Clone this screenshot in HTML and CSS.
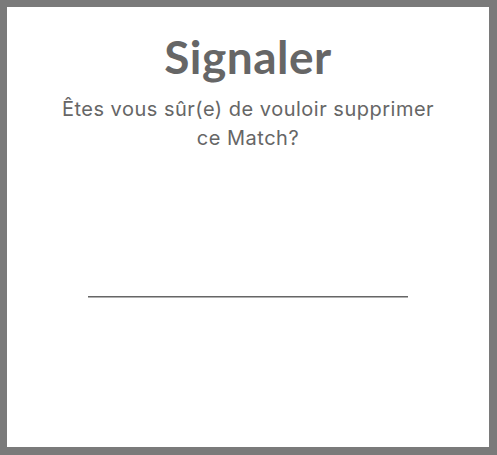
FILE: index.html
```html
<!DOCTYPE html>
<html lang="fr">
<head>
<meta charset="utf-8">
<title>Signaler</title>
<link rel="stylesheet" href="styles.css">
</head>
<body>
<div class="dialog">
  <h1 class="title">Signaler</h1>
  <p class="message">Êtes vous sûr(e) de vouloir supprimer<br>ce Match?</p>
  <div class="field"></div>
</div>
</body>
</html>
```
FILE: styles.css
```css
html, body {
  margin: 0;
  padding: 0;
  background: #7a7a7a;
  width: 497px;
  height: 455px;
  overflow: hidden;
}
.dialog {
  box-sizing: border-box;
  margin: 7px 8px 8px 7px;
  width: 482px;
  height: 440px;
  background: #ffffff;
  display: flex;
  flex-direction: column;
  align-items: center;
  padding-top: 22px;
  font-family: Lato, "Liberation Sans", sans-serif;
  color: #666666;
}
.title {
  margin: 0;
  font-size: 46px;
  font-weight: 700;
  line-height: 56px;
  letter-spacing: 0.5px;
}
.message {
  margin: 10px 0 0;
  font-family: Inter, Lato, "Liberation Sans", sans-serif;
  font-size: 20px;
  font-weight: 400;
  line-height: 29px;
  letter-spacing: 0.5px;
  text-align: center;
}
.field {
  margin-top: 143px;
  width: 320px;
  border-top: 1px solid #666666;
  border-bottom: 1px solid #b0b0b0;
  height: 0;
}
```
